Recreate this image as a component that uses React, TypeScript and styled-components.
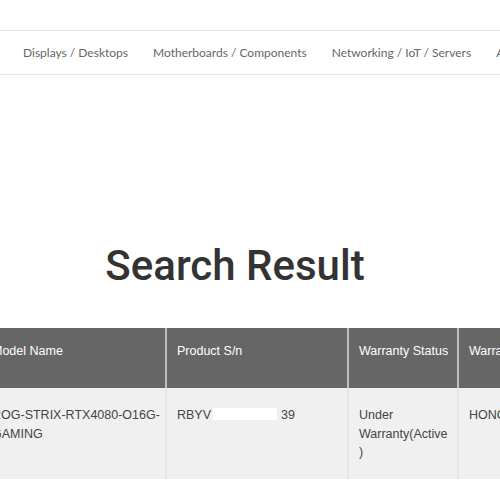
import React from 'react';
import styled, { createGlobalStyle } from 'styled-components';

const GlobalStyle = createGlobalStyle`
  html, body {
    margin: 0;
    padding: 0;
    width: 500px;
    height: 500px;
    overflow: hidden;
    background: #fff;
  }
`;

const Page = styled.div`
  width: 500px;
  padding-top: 30px;
  overflow: hidden;
`;

const NavBar = styled.nav`
  display: flex;
  align-items: center;
  gap: 25px;
  height: 43px;
  padding-left: 23px;
  border-top: 1px solid #e6e6e6;
  border-bottom: 1px solid #e6e6e6;
  white-space: nowrap;
  overflow: hidden;
`;

const NavItem = styled.a`
  font-family: Lato, 'Open Sans', sans-serif;
  font-size: 12px;
  color: #666;
  text-decoration: none;
  flex-shrink: 0;
`;

const Title = styled.h1`
  margin: 0;
  padding: 166px 30px 0 0;
  text-align: center;
  font-family: Roboto, 'Liberation Sans', sans-serif;
  font-weight: 500;
  font-size: 42px;
  line-height: 50px;
  color: #333;
`;

const Table = styled.table`
  width: 606px;
  margin: 37px 0 0 -18px;
  border-collapse: collapse;
  table-layout: fixed;
  font-family: 'Liberation Sans', Arial, sans-serif;
  font-size: 12.5px;
  line-height: 18.5px;
`;

const HeadCell = styled.th<{ $w: number }>`
  width: ${p => p.$w}px;
  height: 60px;
  box-sizing: border-box;
  padding: 14px 8px 0 10px;
  vertical-align: top;
  text-align: left;
  font-weight: 400;
  color: #fff;
  background: #666;
  border-right: 2px solid #bdbdbd;
`;

const Cell = styled.td<{ $wide?: boolean }>`
  height: 91px;
  box-sizing: border-box;
  padding: 18px ${p => (p.$wide ? 2 : 8)}px 0 10px;
  vertical-align: top;
  color: #444;
  background: #f0f0f0;
  border-right: 2px solid #e6e6e6;
  overflow-wrap: break-word;
`;

const Masked = styled.span`
  display: inline-block;
  width: 64px;
  height: 12px;
  margin: 0 4px 0 2px;
  vertical-align: -1px;
  background: #fff;
`;

const navItems = [
  'Displays / Desktops',
  'Motherboards / Components',
  'Networking / IoT / Servers',
  'Accessories',
];

const columns = [
  { label: 'Model Name', width: 184 },
  { label: 'Product S/n', width: 182 },
  { label: 'Warranty Status', width: 110 },
  { label: 'Warranty Territory', width: 130 },
];

export default function App() {
  return (
    <>
      <GlobalStyle />
      <Page>
        <NavBar>
          {navItems.map(item => (
            <NavItem key={item} href="#">
              {item}
            </NavItem>
          ))}
        </NavBar>
        <Title>Search Result</Title>
        <Table>
          <thead>
            <tr>
              {columns.map(c => (
                <HeadCell key={c.label} $w={c.width}>
                  {c.label}
                </HeadCell>
              ))}
            </tr>
          </thead>
          <tbody>
            <tr>
              <Cell $wide>ROG-STRIX-RTX4080-O16G-GAMING</Cell>
              <Cell>
                RBYV
                <Masked />
                39
              </Cell>
              <Cell>Under Warranty(Active)</Cell>
              <Cell>HONG KONG</Cell>
            </tr>
          </tbody>
        </Table>
      </Page>
    </>
  );
}
